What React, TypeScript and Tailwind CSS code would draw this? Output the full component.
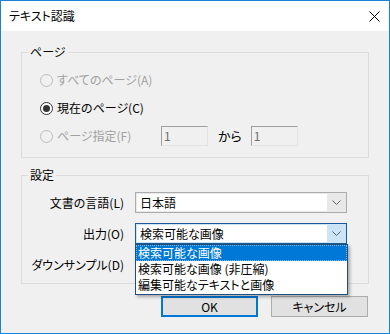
import { ReactNode } from "react";

const font = "font-['Noto_Sans_CJK_JP','Noto_Sans',sans-serif] [font-feature-settings:'palt']";

function Radio({ checked, disabled, children }: { checked?: boolean; disabled?: boolean; children: ReactNode }) {
  return (
    <div className={`flex items-center gap-[4px] h-[20px] ${disabled ? "text-[#a0a0a0]" : "text-black"}`}>
      <span
        className={`w-[13px] h-[13px] rounded-full border flex items-center justify-center ${
          disabled ? "border-[#bcbcbc] bg-[#f0f0f0]" : "border-[#333333] bg-white"
        }`}
      >
        {checked && <span className="w-[7px] h-[7px] rounded-full bg-[#333333]" />}
      </span>
      <span className="leading-[20px]">{children}</span>
    </div>
  );
}

function Chevron() {
  return (
    <svg width="9" height="5" viewBox="0 0 9 5" fill="none">
      <path d="M0.5 0.5 L4.5 4.5 L8.5 0.5" stroke="#606060" strokeWidth="1" />
    </svg>
  );
}

function Combo({ value, open }: { value: string; open?: boolean }) {
  return (
    <div
      className={`w-[212px] h-[21px] border flex p-[1px] ${
        open ? "border-[#1b5c98] bg-[#cce4f7]" : "border-[#acacac] bg-[#e8e8e8]"
      }`}
    >
      <div className="flex-1 bg-white pl-[3px] leading-[17px] text-black">{value}</div>
      <div className="w-[18px] flex items-center justify-center">
        <Chevron />
      </div>
    </div>
  );
}

function Group({ title, children, className }: { title: string; children: ReactNode; className?: string }) {
  return (
    <div className={`relative border border-[#dcdcdc] ${className ?? ""}`}>
      <span className="absolute -top-[10px] left-[6px] bg-[#f0f0f0] px-[2px] leading-[18px] text-black">{title}</span>
      {children}
    </div>
  );
}

function Field() {
  return (
    <div className="w-[47px] h-[20px] border border-t-[#a0a0a0] border-l-[#a0a0a0] border-b-[#e3e3e3] border-r-[#e3e3e3] bg-[#f0f0f0] text-[#6d6d6d] pl-[2px] leading-[18px]">
      1
    </div>
  );
}

function Button({ children, primary }: { children: ReactNode; primary?: boolean }) {
  return (
    <div
      className={`w-[97px] h-[21px] flex items-center justify-center bg-[#e1e1e1] text-black ${
        primary ? "border-2 border-[#0078d7]" : "border border-[#adadad]"
      }`}
    >
      {children}
    </div>
  );
}

export default function App() {
  return (
    <div className={`w-[390px] h-[334px] border border-[#1883d7] bg-[#f0f0f0] flex flex-col text-[12px] ${font}`}>
      <div className="h-[30px] bg-white flex items-center justify-between pl-[8px] pr-[9px]">
        <span className="text-black text-[12px]">テキスト認識</span>
        <svg width="11" height="11" viewBox="0 0 11 11">
          <path d="M0.5 0.5 L10.5 10.5 M10.5 0.5 L0.5 10.5" stroke="#000" strokeWidth="1" />
        </svg>
      </div>

      <div className="px-[20px] flex flex-col">
        <Group title="ページ" className="mt-[21px] h-[106px] pt-[17px] pl-[18px]">
          <div className="flex flex-col gap-[8px]">
            <Radio disabled>すべてのページ(A)</Radio>
            <Radio checked>現在のページ(C)</Radio>
            <div className="flex items-center">
              <div className="w-[121px]">
                <Radio disabled>ページ指定(F)</Radio>
              </div>
              <Field />
              <span className="ml-[10px] mr-[9px] text-black text-[13px]">から</span>
              <Field />
            </div>
          </div>
        </Group>

        <Group title="設定" className="mt-[17px] h-[109px] pt-[16px]">
          <div className="flex flex-col gap-[10px]">
            <div className="flex items-center">
              <span className="w-[103px] text-right text-black pr-[1px]">文書の言語(L)</span>
              <div className="ml-[10px]">
                <Combo value="日本語" />
              </div>
            </div>
            <div className="relative flex items-center">
              <span className="w-[103px] text-right text-black pr-[1px]">出力(O)</span>
              <div className="ml-[10px]">
                <Combo value="検索可能な画像" open />
              </div>
              <div className="absolute left-[113px] top-[21px] w-[213px] border border-[#1e4f7e] bg-white shadow-[2px_2px_3px_rgba(0,0,0,0.3)] z-10">
                <div className="h-[16px] leading-[16px] pl-[2px] bg-[#0078d7] text-white outline outline-1 outline-dotted outline-[#7fb7e8] -outline-offset-1">
                  検索可能な画像
                </div>
                <div className="h-[16px] leading-[16px] pl-[2px] text-black">検索可能な画像 (非圧縮)</div>
                <div className="h-[17px] leading-[16px] pl-[2px] text-black">編集可能なテキストと画像</div>
              </div>
            </div>
            <div className="flex items-center h-[21px]">
              <span className="w-[103px] text-right text-black pr-[1px]">ダウンサンプル(D)</span>
            </div>
          </div>
        </Group>

        <div className="flex justify-end gap-[13px] mt-[12px] pr-[1px]">
          <Button primary>OK</Button>
          <Button>キャンセル</Button>
        </div>
      </div>
    </div>
  );
}
